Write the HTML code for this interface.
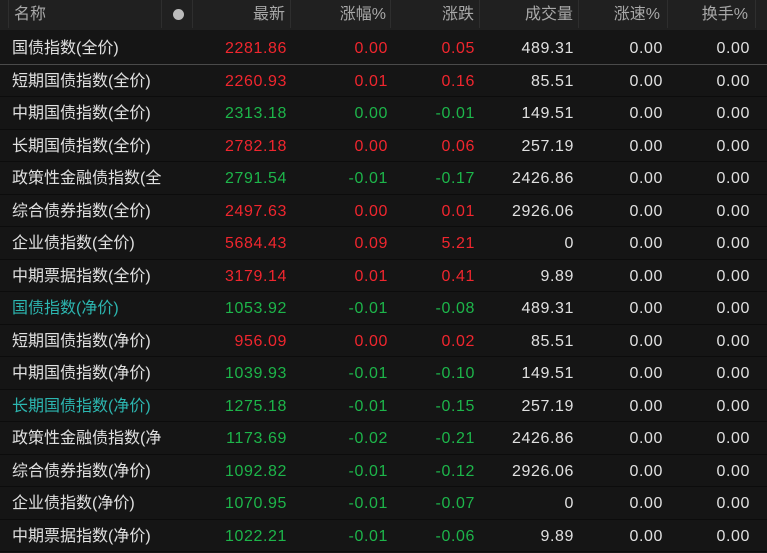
<!DOCTYPE html>
<html><head><meta charset="utf-8"><style>
body{margin:0;width:767px;height:552px;background:#151515;overflow:hidden;font-family:"Liberation Sans","Noto Sans CJK SC",sans-serif;font-size:16px;}
.hd{position:absolute;left:0;top:0;width:767px;height:30px;background:#202020;color:#a8a8a8;}
.hd div{position:absolute;top:0;height:28px;line-height:29px;border-right:1px solid #2e2e2e;}
.row{position:absolute;left:0;width:767px;height:32.5px;border-bottom:1px solid #0c0c0c;box-sizing:border-box;}
.row span{position:absolute;top:0;line-height:33px;white-space:nowrap;}
.n{left:12px;width:150px;overflow:hidden;color:#e0e0e0}
.c1,.c2,.c3,.c4,.c5,.c6{letter-spacing:0.6px}
.c1{right:480px}.c2{right:379px}.c3{right:292px}.c4{right:193px}.c5{right:104px}.c6{right:17px}
.r{color:#f0262e}.g{color:#1db54a}.w{color:#e0e0e0}.t{color:#2cb6b0}
</style></head><body>
<div class="hd">
<div style="left:0;width:8px"></div>
<div style="left:8px;width:154px;padding-left:6px;box-sizing:border-box">名称</div>
<div style="left:163px;width:29px"><span style="position:absolute;left:10px;top:9px;width:11px;height:11px;border-radius:50%;background:#bbb"></span></div>
<div style="left:193px;width:98px;text-align:right;padding-right:5px;box-sizing:border-box">最新</div>
<div style="left:292px;width:99px;text-align:right;padding-right:4px;box-sizing:border-box">涨幅%</div>
<div style="left:392px;width:88px;text-align:right;padding-right:5px;box-sizing:border-box">涨跌</div>
<div style="left:481px;width:98px;text-align:right;padding-right:5px;box-sizing:border-box">成交量</div>
<div style="left:580px;width:88px;text-align:right;padding-right:7px;box-sizing:border-box">涨速%</div>
<div style="left:669px;width:87px;text-align:right;padding-right:7px;box-sizing:border-box">换手%</div>
</div>
<div id="b"></div>
<script>
var d=[
["国债指数(全价)","w","2281.86","r","0.00","r","0.05","r","489.31"],
["短期国债指数(全价)","w","2260.93","r","0.01","r","0.16","r","85.51"],
["中期国债指数(全价)","w","2313.18","g","0.00","g","-0.01","g","149.51"],
["长期国债指数(全价)","w","2782.18","r","0.00","r","0.06","r","257.19"],
["政策性金融债指数(全价)","w","2791.54","g","-0.01","g","-0.17","g","2426.86"],
["综合债券指数(全价)","w","2497.63","r","0.00","r","0.01","r","2926.06"],
["企业债指数(全价)","w","5684.43","r","0.09","r","5.21","r","0"],
["中期票据指数(全价)","w","3179.14","r","0.01","r","0.41","r","9.89"],
["国债指数(净价)","t","1053.92","g","-0.01","g","-0.08","g","489.31"],
["短期国债指数(净价)","w","956.09","r","0.00","r","0.02","r","85.51"],
["中期国债指数(净价)","w","1039.93","g","-0.01","g","-0.10","g","149.51"],
["长期国债指数(净价)","t","1275.18","g","-0.01","g","-0.15","g","257.19"],
["政策性金融债指数(净价)","w","1173.69","g","-0.02","g","-0.21","g","2426.86"],
["综合债券指数(净价)","w","1092.82","g","-0.01","g","-0.12","g","2926.06"],
["企业债指数(净价)","w","1070.95","g","-0.01","g","-0.07","g","0"],
["中期票据指数(净价)","w","1022.21","g","-0.01","g","-0.06","g","9.89"]];
var h="";
d.forEach(function(r,i){
var top=32+32.5*i;
var bb=i==0?"border-bottom:1px solid #4a4a4a;":"";
h+='<div class="row" style="top:'+top+'px;'+bb+'"><span class="n '+r[1]+'">'+r[0]+'</span><span class="c1 '+r[3]+'">'+r[2]+'</span><span class="c2 '+r[5]+'">'+r[4]+'</span><span class="c3 '+r[7]+'">'+r[6]+'</span><span class="c4 w">'+r[8]+'</span><span class="c5 w">0.00</span><span class="c6 w">0.00</span></div>';
});
document.getElementById("b").innerHTML=h;
</script>
</body></html>
